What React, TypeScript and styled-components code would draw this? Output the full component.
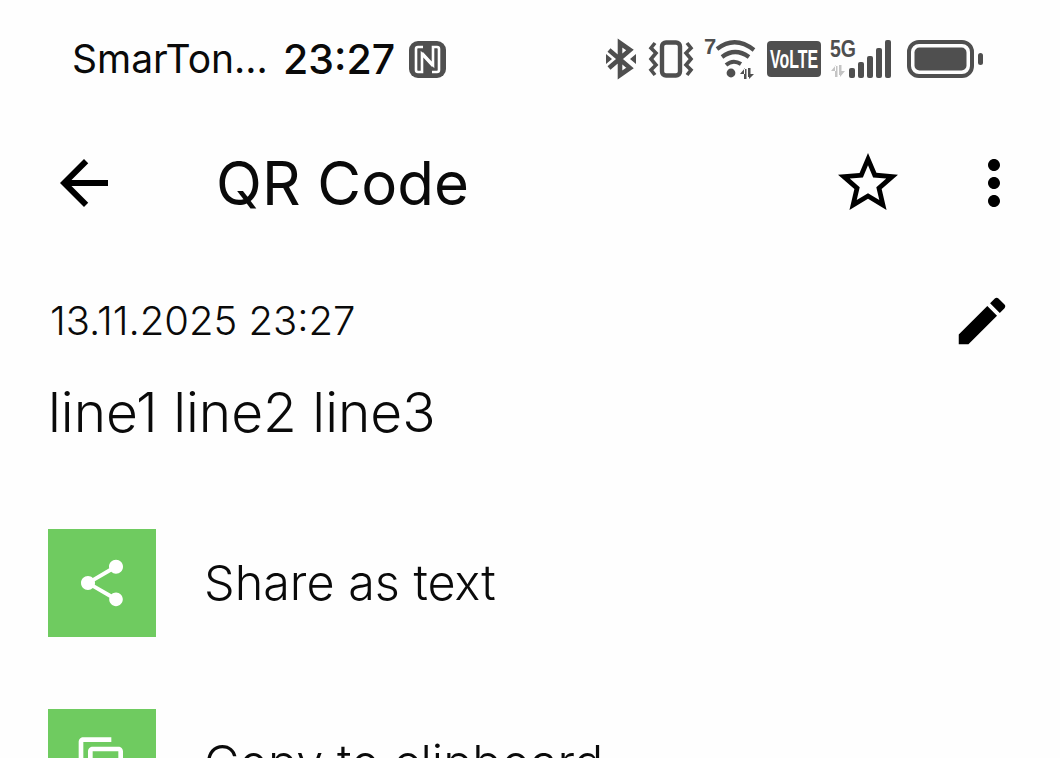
import React from "react";
import styled, { createGlobalStyle } from "styled-components";

const GlobalStyle = createGlobalStyle`
  html, body {
    margin: 0;
    padding: 0;
    background: #fefefe;
  }
`;

const Screen = styled.div`
  width: 1060px;
  height: 758px;
  overflow: hidden;
  background: #fefefe;
  color: #0a0a0a;
  font-family: Inter, "Noto Sans", sans-serif;
`;

const StatusBar = styled.div`
  height: 118px;
  box-sizing: border-box;
  padding: 0 77px 0 72px;
  display: flex;
  align-items: center;
  justify-content: space-between;
`;

const StatusLeft = styled.div`
  display: flex;
  align-items: center;
`;

const Carrier = styled.span`
  font-size: 39px;
  line-height: 44px;
  width: 212px;
  white-space: nowrap;
`;

const Clock = styled.span`
  font-size: 41px;
  line-height: 44px;
  font-weight: 500;
  width: 125px;
  margin-left: -1px;
  white-space: nowrap;
`;

const StatusRight = styled.div`
  display: flex;
  align-items: center;
`;

const StatusIcon = styled.svg<{ $gap?: number }>`
  display: block;
  flex: none;
  overflow: visible;
  margin-left: ${(p) => p.$gap ?? 0}px;
`;

const NfcMark = styled.svg`
  display: block;
  flex: none;
  margin-left: 1px;
`;

const Toolbar = styled.div`
  height: 130px;
  box-sizing: border-box;
  padding: 0 30px 0 48px;
  display: flex;
  align-items: center;
`;

const ToolbarTitle = styled.h1`
  flex: 1;
  margin: 0 0 0 96px;
  font-size: 60px;
  line-height: 72px;
  font-weight: 400;
`;

const ToolbarIcon = styled.svg<{ $gap?: number }>`
  display: block;
  flex: none;
  width: 72px;
  height: 72px;
  margin-left: ${(p) => p.$gap ?? 0}px;
  fill: #000;
`;

const Details = styled.section`
  padding: 45px 47px 0 50px;
`;

const DateRow = styled.div`
  display: flex;
  align-items: center;
  justify-content: space-between;
  height: 56px;
`;

const DateText = styled.span`
  font-size: 40px;
  line-height: 56px;
  font-weight: 350;
`;

const EditIcon = styled.svg`
  display: block;
  width: 62px;
  height: 62px;
  fill: #000;
`;

const ContentText = styled.p`
  margin: 27px 0 0 -2px;
  font-size: 55px;
  line-height: 72px;
  font-weight: 350;
`;

const ActionList = styled.div`
  padding: 81px 48px 0;
  display: flex;
  flex-direction: column;
  gap: 72px;
`;

const ActionRow = styled.div`
  display: flex;
  align-items: center;
  height: 108px;
`;

const ActionTile = styled.div`
  width: 108px;
  height: 108px;
  flex: none;
  display: flex;
  align-items: center;
  justify-content: center;
  background: #6fcb60;
`;

const ActionIcon = styled.svg`
  display: block;
  width: 56px;
  height: 56px;
  fill: #fff;
`;

const ActionLabel = styled.span`
  margin-left: 48px;
  font-size: 48.5px;
  line-height: 60px;
  font-weight: 350;
`;

const iconGrey = "#4f4f4f";

const StatusIcons: React.FC = () => (
  <StatusRight>
    {/* bluetooth */}
    <StatusIcon width="30" height="38" viewBox="0 0 30 38">
      <path d="M3 10 L24 28 L14 35 V3 L24 10 L3 28" fill="none" stroke={iconGrey} strokeWidth="4.6" />
      <path d="M0 14 L6 19 L0 24 Z M30 14 L24 19 L30 24 Z" fill={iconGrey} />
    </StatusIcon>
    {/* vibrate */}
    <StatusIcon width="44" height="38" viewBox="0 0 44 38" $gap={13}>
      <rect x="13" y="2.5" width="18" height="33" rx="4" fill="none" stroke={iconGrey} strokeWidth="4.4" />
      <path d="M6 3 L2 8 L7 13 L2 19 L7 25 L2 30 L6 35" fill="none" stroke={iconGrey} strokeWidth="3.6" />
      <path d="M38 3 L42 8 L37 13 L42 19 L37 25 L42 30 L38 35" fill="none" stroke={iconGrey} strokeWidth="3.6" />
    </StatusIcon>
    {/* wifi with sub-band number */}
    <StatusIcon width="53" height="41" viewBox="0 0 53 41" $gap={11}>
      <text x="0" y="15" fontFamily="Liberation Sans, sans-serif" fontWeight="700" fontSize="22" fill={iconGrey}>7</text>
      <path d="M13 10 Q31 -4 50 11" fill="none" stroke={iconGrey} strokeWidth="4.2" />
      <path d="M18 18 Q31 8 45 18" fill="none" stroke={iconGrey} strokeWidth="4.2" />
      <path d="M22 26 Q29 20 37 25" fill="none" stroke={iconGrey} strokeWidth="4" />
      <circle cx="27" cy="34" r="4.4" fill={iconGrey} />
      <path d="M41 35 H36 L41 29 Z M40 30 V40 H42.5 V30 Z M45 40 L50 35 H45 Z M44 29 V38 H46.5 V29 Z" fill={iconGrey} />
    </StatusIcon>
    {/* volte */}
    <StatusIcon width="54" height="36" viewBox="0 0 54 36" $gap={10}>
      <rect width="54" height="36" rx="4" fill={iconGrey} />
      <text x="27" y="27" textAnchor="middle" textLength="48" lengthAdjust="spacingAndGlyphs" fontFamily="Liberation Sans, sans-serif" fontWeight="700" fontSize="25" fill="#fff">VoLTE</text>
    </StatusIcon>
    {/* 5g signal */}
    <StatusIcon width="63" height="40" viewBox="0 0 63 40" $gap={9}>
      <text x="0" y="18" textLength="26" lengthAdjust="spacingAndGlyphs" fontFamily="Liberation Sans, sans-serif" fontWeight="700" fontSize="24" fill={iconGrey}>5G</text>
      <path d="M6 32 H1 L6 26 Z M5 27 V38 H7.5 V27 Z M10 38 L15 32 H10 Z M9 26 V36 H11.5 V26 Z" fill="#c4c4c4" />
      <rect x="19" y="29" width="6" height="10" rx="2" fill={iconGrey} />
      <rect x="28" y="23" width="6" height="16" rx="2" fill={iconGrey} />
      <rect x="37" y="17" width="6" height="22" rx="2" fill={iconGrey} />
      <rect x="46" y="9" width="6" height="30" rx="2" fill={iconGrey} />
      <rect x="55" y="1" width="6" height="38" rx="2" fill={iconGrey} />
    </StatusIcon>
    {/* battery */}
    <StatusIcon width="76" height="38" viewBox="0 0 76 38" $gap={14}>
      <rect x="2" y="2" width="63" height="34" rx="10" fill="none" stroke={iconGrey} strokeWidth="4" />
      <rect x="7.5" y="7.5" width="52" height="23" rx="5" fill={iconGrey} />
      <rect x="71" y="13" width="5" height="12" rx="2.5" fill={iconGrey} />
    </StatusIcon>
  </StatusRight>
);

const NfcIcon: React.FC = () => (
  <NfcMark width="37" height="37" viewBox="0 0 37 37">
    <rect width="37" height="37" rx="9" fill={iconGrey} />
    <path d="M14 6 H9 Q7 6 7 8 V29 Q7 31 9 31 H13 V13 L24 25" fill="none" stroke="#fff" strokeWidth="2.6" />
    <path d="M23 31 H28 Q30 31 30 29 V8 Q30 6 28 6 H24 V24 L13 12" fill="none" stroke="#fff" strokeWidth="2.6" />
  </NfcMark>
);

const App: React.FC = () => (
  <Screen>
    <GlobalStyle />
    <StatusBar>
      <StatusLeft>
        <Carrier>SmarTon...</Carrier>
        <Clock>23:27</Clock>
        <NfcIcon />
      </StatusLeft>
      <StatusIcons />
    </StatusBar>

    <Toolbar>
      <ToolbarIcon viewBox="0 0 24 24">
        <path d="M20 11H7.83l5.59-5.59L12 4l-8 8 8 8 1.41-1.41L7.83 13H20v-2z" />
      </ToolbarIcon>
      <ToolbarTitle>QR Code</ToolbarTitle>
      <ToolbarIcon viewBox="0 0 24 24">
        <path d="M22 9.24l-7.19-.62L12 2 9.19 8.63 2 9.24l5.46 4.73L5.82 21 12 17.27 18.18 21l-1.63-7.03L22 9.24zM12 15.4l-3.76 2.27 1-4.28-3.32-2.88 4.38-.38L12 6.1l1.71 4.04 4.38.38-3.32 2.88 1 4.28L12 15.4z" />
      </ToolbarIcon>
      <ToolbarIcon viewBox="0 0 24 24" $gap={54}>
        <path d="M12 8c1.1 0 2-.9 2-2s-.9-2-2-2-2 .9-2 2 .9 2 2 2zm0 2c-1.1 0-2 .9-2 2s.9 2 2 2 2-.9 2-2-.9-2-2-2zm0 6c-1.1 0-2 .9-2 2s.9 2 2 2 2-.9 2-2-.9-2-2-2z" />
      </ToolbarIcon>
    </Toolbar>

    <Details>
      <DateRow>
        <DateText>13.11.2025 23:27</DateText>
        <EditIcon viewBox="0 0 24 24">
          <path d="M3 17.25V21h3.75L17.81 9.94l-3.75-3.75L3 17.25zM20.71 7.04c.39-.39.39-1.02 0-1.41l-2.34-2.34c-.39-.39-1.02-.39-1.41 0l-1.83 1.83 3.75 3.75 1.83-1.83z" />
        </EditIcon>
      </DateRow>
      <ContentText>line1 line2 line3</ContentText>
    </Details>

    <ActionList>
      <ActionRow>
        <ActionTile>
          <ActionIcon viewBox="0 0 24 24">
            <path d="M18 16.08c-.76 0-1.44.3-1.96.77L8.91 12.7c.05-.23.09-.46.09-.7s-.04-.47-.09-.7l7.05-4.11c.54.5 1.25.81 2.04.81 1.66 0 3-1.34 3-3s-1.34-3-3-3-3 1.34-3 3c0 .24.04.47.09.7L8.04 9.81C7.5 9.31 6.79 9 6 9c-1.66 0-3 1.34-3 3s1.34 3 3 3c.79 0 1.5-.31 2.04-.81l7.12 4.16c-.05.21-.08.43-.08.65 0 1.61 1.31 2.92 2.92 2.92s2.92-1.31 2.92-2.92-1.31-2.92-2.92-2.92z" />
          </ActionIcon>
        </ActionTile>
        <ActionLabel>Share as text</ActionLabel>
      </ActionRow>
      <ActionRow>
        <ActionTile>
          <ActionIcon viewBox="0 0 24 24">
            <path d="M16 1H4c-1.1 0-2 .9-2 2v14h2V3h12V1zm3 4H8c-1.1 0-2 .9-2 2v14c0 1.1.9 2 2 2h11c1.1 0 2-.9 2-2V7c0-1.1-.9-2-2-2zm0 16H8V7h11v14z" />
          </ActionIcon>
        </ActionTile>
        <ActionLabel>Copy to clipboard</ActionLabel>
      </ActionRow>
    </ActionList>
  </Screen>
);

export default App;
